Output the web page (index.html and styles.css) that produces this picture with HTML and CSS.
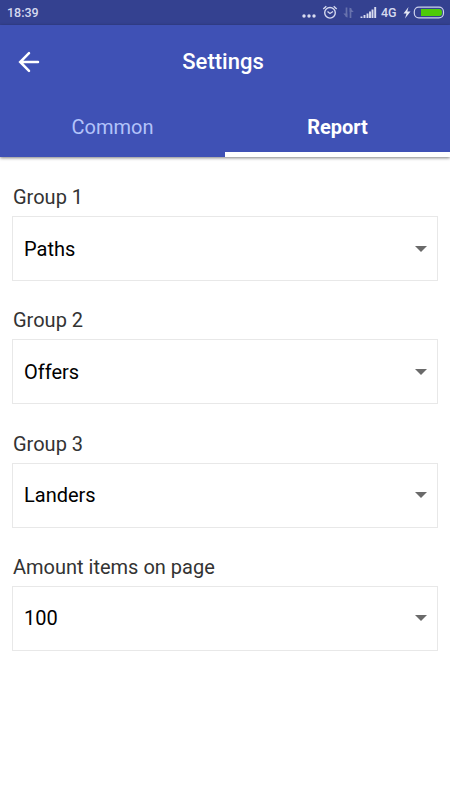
FILE: index.html
```html
<!DOCTYPE html>
<html lang="en">
<head>
  <meta charset="UTF-8">
  <meta name="viewport" content="width=device-width, initial-scale=1.0">
  <title>Settings</title>
  <link rel="stylesheet" href="styles.css">
</head>
<body>
  <div class="statusbar">
    <span class="time">18:39</span>
    <svg width="80" height="25" viewBox="0 0 80 25">
      <g fill="#d9dcf0">
        <circle cx="4" cy="16" r="1.700"/>
        <circle cx="9" cy="16" r="1.700"/>
        <circle cx="14" cy="16" r="1.700"/>
      </g>
      <g fill="none" stroke="#d5d9ef" stroke-width="1.4">
        <circle cx="30" cy="12.800" r="5.300"/>
        <path d="M27.500 11.500l2.500 2 3-2M23.300 9l3-2.700M36.700 9l-3-2.700"/>
      </g>
      <path d="M46.500 7.500V17M50.500 8v10" fill="none" stroke="#6872ad" stroke-width="1.700"/>
      <path d="M43.300 13.500h4V18zM53.700 12h-4V7.500z" fill="#6872ad"/>
      <path d="M61.500 18v-1.500M64.500 18v-3M67.500 18v-4.500M70 18v-6.500M72.500 18V9.500M75.200 18V7" stroke="#d9dcf0" stroke-width="1.900"/>
    </svg>
    <span class="network">4G</span>
    <svg width="46" height="25" viewBox="0 0 46 25">
      <path d="M8.500 7L3.500 13.500h3L5 18.500l5.500-7H7.300z" fill="#e4e7f5"/>
      <rect x="14.300" y="7.200" width="29.200" height="10.600" rx="4.500" fill="none" stroke="#cdd2ec" stroke-width="1.200"/>
      <path d="M21 9h18.500q2.500 0 2.500 3.500T39.500 16H21z" fill="#4eca08"/>
    </svg>
  </div>
  <header class="header">
    <div class="toolbar">
      <svg class="back" width="24" height="24" viewBox="0 0 24 24">
        <path d="M21 12H4M12 3.200L3.200 12l8.800 8.800" fill="none" stroke="#fff" stroke-width="2.500" stroke-linecap="round"/>
      </svg>
      <h1>Settings</h1>
    </div>
    <nav class="tabs">
      <a class="tab">Common</a>
      <a class="tab active">Report</a>
    </nav>
  </header>
  <main class="form">
    <div class="field">
      <label>Group 1</label>
      <div class="select">Paths</div>
    </div>
    <div class="field">
      <label>Group 2</label>
      <div class="select">Offers</div>
    </div>
    <div class="field">
      <label>Group 3</label>
      <div class="select">Landers</div>
    </div>
    <div class="field">
      <label>Amount items on page</label>
      <div class="select">100</div>
    </div>
  </main>
</body>
</html>
```
FILE: styles.css
```css
* {
  box-sizing: border-box;
}
body {
  margin: 0;
  font-family: Roboto, sans-serif;
  background: #fff;
}
.statusbar {
  display: flex;
  align-items: center;
  height: 25px;
  padding: 0 4px 0 7px;
  background: #344190;
  color: #d5d9ef;
  font-size: 12.5px;
  font-weight: 500;
}
.time {
  margin-right: auto;
}
.network {
  width: 20px;
  padding-left: 1px;
}
.header {
  height: 132px;
  background: #3f51b5;
  color: #fff;
  box-shadow: 0 1px 3px rgba(0, 0, 0, 0.5);
}
.toolbar {
  display: grid;
  grid-template-columns: 24px 1fr 24px;
  align-items: center;
  height: 73px;
  padding: 0 21px 0 17px;
}
h1 {
  margin: 0;
  text-align: center;
  font-size: 22px;
  font-weight: 500;
}
.tabs {
  display: flex;
  height: 59px;
}
.tab {
  flex: 1;
  text-align: center;
  line-height: 59px;
  font-size: 20px;
  color: #b3c3fa;
}
.tab.active {
  color: #fff;
  font-weight: bold;
  border-bottom: 5px solid #fff;
}
.form {
  padding: 28px 12px;
}
.field {
  height: 123.3px;
}
label {
  display: block;
  height: 31px;
  padding-left: 1px;
  line-height: 24px;
  font-size: 20px;
  color: #333;
}
.select {
  display: flex;
  align-items: center;
  justify-content: space-between;
  height: 65px;
  padding: 0 10px 0 11px;
  border: 1px solid #e8e8e8;
  font-size: 20px;
  color: #000;
}
.select::after {
  content: "";
  border: 6px solid transparent;
  border-top-color: #6a6a6a;
  border-bottom: 0;
}
```
